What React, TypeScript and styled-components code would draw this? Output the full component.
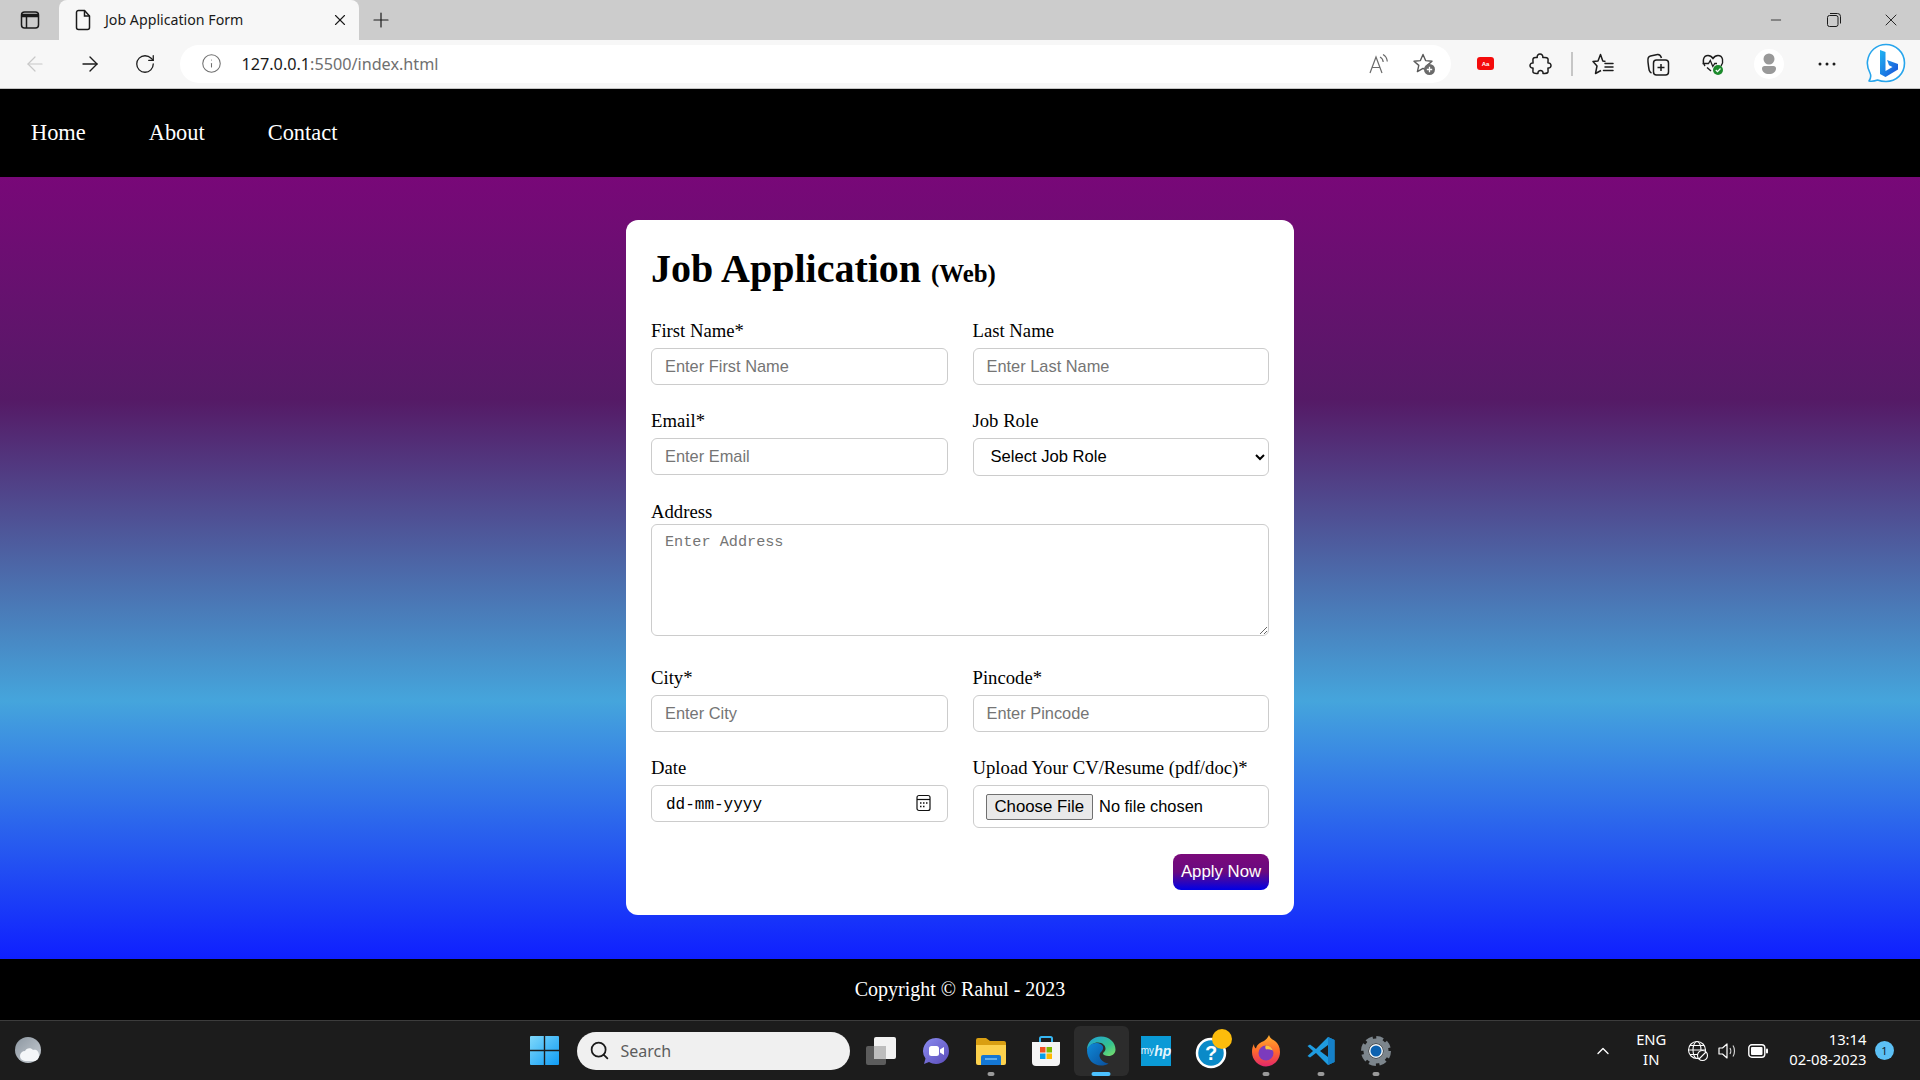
import React from 'react';
import styled, { createGlobalStyle } from 'styled-components';
import { ArrowLeft, ArrowRight, ChevronUp, Info, Minus, Plus, RotateCw, Search, X } from 'lucide-react';

const GlobalStyle = createGlobalStyle`
	html, body {
		margin: 0;
		padding: 0;
		height: 100%;
		overflow: hidden;
	}
	* {
		box-sizing: border-box;
	}
	#root {
		height: 100%;
	}
`;

const uiFont = `"Noto Sans", "Open Sans", sans-serif`;
const pageFont = `"Liberation Serif", "Times New Roman", serif`;
const fieldFont = `"Liberation Sans", Arial, sans-serif`;
const monoFont = `"Liberation Mono", "Courier New", monospace`;

const Screen = styled.div`
	display: flex;
	flex-direction: column;
	height: 1080px;
	width: 1920px;
	font-family: ${pageFont};
`;

/* browser chrome */
const TabStrip = styled.div`
	display: flex;
	align-items: stretch;
	height: 40px;
	background: #cccccc;
	color: #1a1a1a;
`;

const SideToggle = styled.div`
	display: flex;
	align-items: center;
	justify-content: center;
	width: 59px;
`;

const Tab = styled.div`
	display: flex;
	align-items: center;
	width: 300px;
	padding: 0 10px 0 15px;
	background: #f7f7f7;
	border-radius: 8px 8px 0 0;
	font-family: ${uiFont};
	font-size: 14.2px;
`;

const TabTitle = styled.span`
	flex: 1;
	margin-left: 13px;
	padding-bottom: 2px;
`;

const NewTab = styled.div`
	display: flex;
	align-items: center;
	justify-content: center;
	width: 44px;
`;

const StripSpacer = styled.div`
	flex: 1;
`;

const WinButton = styled.div`
	display: flex;
	align-items: center;
	justify-content: center;
	width: 57.5px;
`;

const Toolbar = styled.div`
	display: flex;
	align-items: center;
	height: 49px;
	padding: 0 0 1px 7px;
	background: #f7f7f7;
	border-bottom: 1px solid #c4c4c4;
`;

const ToolButton = styled.div<{ $width?: number; $muted?: boolean }>`
	display: flex;
	align-items: center;
	justify-content: center;
	flex: none;
	width: ${({ $width }) => $width ?? 55}px;
	color: ${({ $muted }) => ($muted ? '#c8c8c8' : '#1c1c1c')};
`;

const AddressPill = styled.div`
	display: flex;
	align-items: center;
	width: 1271px;
	height: 38px;
	margin: 0 7.5px;
	padding: 0 4px 0 21px;
	background: #ffffff;
	border-radius: 19px;
	font-family: ${uiFont};
	font-size: 16.2px;
	color: #6f6f6f;
`;

const UrlText = styled.span`
	flex: 1;
	margin-left: 20px;
	b {
		font-weight: 400;
		color: #1a1a1a;
	}
`;

const PillAction = styled.div`
	display: flex;
	align-items: center;
	justify-content: center;
	width: 45px;
	color: #6a6a6a;
`;

const ToolDivider = styled.div`
	flex: none;
	width: 1.5px;
	height: 24px;
	margin: 0 3px;
	background: #c6c6c6;
`;

const RedBadge = styled.div`
	display: flex;
	align-items: center;
	justify-content: center;
	width: 17px;
	height: 13px;
	border-radius: 3px;
	background: #f40b0b;
	color: #ffffff;
	font-family: ${fieldFont};
	font-size: 6px;
	font-weight: 700;
`;

const Avatar = styled.div`
	display: flex;
	align-items: center;
	justify-content: center;
	width: 30px;
	height: 30px;
	margin-left: 2px;
	border-radius: 50%;
	background: #ffffff;
`;

/* page */
const Nav = styled.nav`
	display: flex;
	align-items: center;
	gap: 63px;
	height: 88px;
	padding-left: 31px;
	background: #000000;
`;

const NavLink = styled.a`
	color: #ffffff;
	font-size: 22.4px;
	text-decoration: none;
`;

const Main = styled.main`
	flex: 1;
	display: flex;
	align-items: center;
	justify-content: center;
	padding-bottom: 2px;
	background: linear-gradient(180deg, #780878 0%, #551a66 28.5%, #45a5dc 67%, #0f1fff 100%);
`;

const Card = styled.form`
	width: 668px;
	padding: 25px;
	background: #ffffff;
	border-radius: 12px;
	color: #000000;
`;

const Title = styled.h1`
	margin: 1px 0 28px;
	font-size: 40px;
	line-height: 46px;
	font-weight: 700;
	small {
		font-size: 24.8px;
		line-height: 0;
	}
`;

const FieldGrid = styled.div`
	display: grid;
	grid-template-columns: minmax(0, 1fr) minmax(0, 1fr);
	column-gap: 25px;
	row-gap: 25px;
`;

const Field = styled.div<{ $wide?: boolean }>`
	display: flex;
	flex-direction: column;
	align-items: stretch;
	min-width: 0;
	grid-column: ${({ $wide }) => ($wide ? '1 / -1' : 'auto')};
`;

const Label = styled.label<{ $tight?: boolean }>`
	margin-bottom: ${({ $tight }) => ($tight ? 2 : 7)}px;
	font-size: 18.7px;
	line-height: 21px;
`;

const Input = styled.input`
	height: 37px;
	padding: 0 13px;
	border: 1.5px solid #cccccc;
	border-radius: 6px;
	background: #ffffff;
	font-family: ${fieldFont};
	font-size: 16.4px;
	color: #000000;
	&::placeholder {
		color: #757575;
		opacity: 1;
	}
`;

const Select = styled.select`
	height: 38px;
	padding: 0 13px;
	border: 1.5px solid #cccccc;
	border-radius: 6px;
	background: #ffffff;
	font-family: ${fieldFont};
	font-size: 16.6px;
	color: #000000;
`;

const TextArea = styled.textarea`
	display: block;
	height: 112px;
	margin-bottom: 6px;
	padding: 8px 13px;
	border: 1.5px solid #cccccc;
	border-radius: 6px;
	font-family: ${monoFont};
	font-size: 15.2px;
	&::placeholder {
		color: #757575;
		opacity: 1;
	}
`;

const DateBox = styled.div`
	display: flex;
	align-items: center;
	justify-content: space-between;
	height: 37px;
	padding: 0 16px 0 14px;
	border: 1.5px solid #cccccc;
	border-radius: 6px;
	font-family: ${monoFont};
	font-size: 16px;
	color: #000000;
	span {
		padding-top: 3px;
	}
`;

const FileInput = styled.input`
	width: 100%;
	height: 43px;
	padding: 8px 12px 6px;
	border: 1.5px solid #cccccc;
	border-radius: 6px;
	font-family: ${fieldFont};
	font-size: 16.4px;
	color: #000000;
	&::file-selector-button {
		height: 26px;
		margin-right: 6px;
		padding: 0 8px;
		border: 1px solid #707070;
		border-radius: 2px;
		background: #e9e9e9;
		font-family: ${fieldFont};
		font-size: 16.8px;
		color: #000000;
	}
`;

const Actions = styled.div`
	display: flex;
	justify-content: flex-end;
	margin-top: 26px;
`;

const ApplyButton = styled.button`
	width: 96px;
	height: 36px;
	padding: 0;
	border: none;
	border-radius: 8px;
	background: linear-gradient(180deg, #7a0a7a 0%, #6a0a80 50%, #0000e6 100%);
	color: #ffffff;
	font-family: ${fieldFont};
	font-size: 16.8px;
`;

const Footer = styled.footer`
	display: flex;
	align-items: center;
	justify-content: center;
	height: 61px;
	background: #000000;
	color: #ffffff;
	font-size: 20px;
`;

/* windows taskbar */
const Taskbar = styled.div`
	display: grid;
	grid-template-columns: 1fr auto 1fr;
	align-items: center;
	height: 60px;
	background: #1c1c1c;
	border-top: 1px solid #3c3c3c;
	color: #ffffff;
	font-family: ${uiFont};
`;

const TaskLeft = styled.div`
	display: flex;
	align-items: center;
	padding-left: 14px;
`;

const TaskCenter = styled.div`
	display: flex;
	align-items: center;
`;

const TaskItem = styled.div<{ $active?: boolean; $running?: boolean }>`
	position: relative;
	display: flex;
	align-items: center;
	justify-content: center;
	width: 55px;
	height: 50px;
	border-radius: 6px;
	background: ${({ $active }) => ($active ? '#2c2c2c' : 'transparent')};
	&::after {
		content: '';
		display: ${({ $active, $running }) => ($active || $running ? 'block' : 'none')};
		position: absolute;
		bottom: 0;
		left: 50%;
		transform: translateX(-50%);
		width: ${({ $active }) => ($active ? 19 : 7)}px;
		height: 4px;
		border-radius: 2px;
		background: ${({ $active }) => ($active ? '#4cc2ff' : '#9a9a9a')};
	}
`;

const SearchBox = styled.div`
	display: flex;
	align-items: center;
	gap: 11px;
	width: 273px;
	height: 38px;
	margin: 0 4px 0 5px;
	padding-left: 12px;
	border-radius: 19px;
	background: #f0f0f0;
	color: #5c5c5c;
	font-size: 16px;
`;

const MyHp = styled.div`
	display: flex;
	align-items: center;
	justify-content: center;
	width: 30px;
	height: 30px;
	background: #0a9ad6;
	color: #e4f5fc;
	font-family: ${fieldFont};
	font-size: 10px;
	i {
		font-size: 14px;
		font-weight: 700;
	}
`;

const Tray = styled.div`
	display: flex;
	align-items: center;
	justify-content: flex-end;
	padding-right: 26px;
`;

const TrayIcon = styled.div<{ $width: number }>`
	display: flex;
	align-items: center;
	justify-content: center;
	width: ${({ $width }) => $width}px;
`;

const TrayText = styled.div<{ $end?: boolean }>`
	display: flex;
	flex-direction: column;
	align-items: ${({ $end }) => ($end ? 'flex-end' : 'center')};
	gap: 2px;
	margin-left: ${({ $end }) => ($end ? 13 : 0)}px;
	margin-bottom: 4px;
	font-size: 14.8px;
	line-height: 18px;
`;

const CountBadge = styled.div`
	display: flex;
	align-items: center;
	justify-content: center;
	width: 19px;
	height: 19px;
	margin-left: 8.5px;
	border-radius: 50%;
	background: #5cc0f5;
	color: #10222c;
	font-size: 11px;
`;

const PageIcon = () => (
	<svg width="18" height="22" viewBox="0 0 18 22" fill="none" stroke="#1a1a1a" strokeWidth="1.5">
		<path d="M2.5 3.5a2 2 0 0 1 2-2h6l5 5.5v11.5a2 2 0 0 1-2 2h-9a2 2 0 0 1-2-2z" />
		<path d="M10.5 1.5v5.5h5" />
	</svg>
);

const SidebarIcon = () => (
	<svg width="20" height="20" viewBox="0 0 20 20" fill="none" stroke="#1a1a1a" strokeWidth="1.5">
		<rect x="1.5" y="2" width="17" height="16" rx="3" />
		<path d="M1.5 5.5h17" strokeWidth="3.5" />
		<path d="M6.5 6v12" />
	</svg>
);

const RestoreIcon = () => (
	<svg width="14" height="14" viewBox="0 0 14 14" fill="none" stroke="#1a1a1a" strokeWidth="1">
		<rect x="0.5" y="2.5" width="10.5" height="11" rx="2" />
		<path d="M3 .5h7.5a3 3 0 0 1 3 3v7" />
	</svg>
);

const ReadAloudIcon = () => (
	<svg width="22" height="22" viewBox="0 0 22 22" fill="none" stroke="#6a6a6a" strokeWidth="1.2">
		<path d="M2 20 8 4l6 16M4.2 14.5h7.6" />
		<path d="M12 4c2 1 3 2.5 3.2 5M15 1.5c2.7 1.5 4 3.8 4.3 7" />
	</svg>
);

const StarAddIcon = () => (
	<svg width="24" height="24" viewBox="0 0 24 24" fill="none">
		<path d="M11 2.5 13.6 8.6l6.4.6-4.8 4.2 1.4 6.2L11 16.4l-5.6 3.2 1.4-6.2L2 9.2l6.4-.6z" stroke="#5a5a5a" strokeWidth="1.4" strokeLinejoin="round" />
		<circle cx="17.5" cy="17.5" r="5.5" fill="#6a6a6a" />
		<path d="M17.5 14.8v5.4M14.8 17.5h5.4" stroke="#fff" strokeWidth="1.3" />
	</svg>
);

const PuzzleIcon = () => (
	<svg width="23" height="22" viewBox="0 0 23 22" fill="none" stroke="#1c1c1c" strokeWidth="1.5" strokeLinejoin="round">
		<path d="M8.2 4.500C7.800 2.500 9.300 1 11 1s3.200 1.500 2.800 3.500c2 .3 4.200-.2 5 1 .7 1.100 0 3 .2 4.500 1.700-.4 3 .9 3 2.500s-1.300 2.900-3 2.500c-.2 1.500.5 3.400-.2 4.500-.8 1.200-3 .7-4.800 1 .3-1.700-1-3-2.500-3s-2.800 1.300-2.500 3c-1.800-.3-4 .2-4.800-1-.7-1.100 0-3-.2-4.500-1.500.4-3-.9-3-2.500s1.500-2.900 3-2.500c.2-1.500-.5-3.400.2-4.500.8-1.200 2-.7 4-1z" />
	</svg>
);

const FavoritesIcon = () => (
	<svg width="22" height="22" viewBox="0 0 22 22" fill="none" stroke="#1c1c1c" strokeWidth="1.5" strokeLinejoin="round">
		<path d="M13.500 8.500 10.800 8 8.500 1.500 6 8l-5 .6 4 4.400L3.500 20.500l5.500-3" />
		<path d="M13 10.500h8M13 14h8M11.500 17.500H21" strokeLinecap="round" />
	</svg>
);

const CollectionsIcon = () => (
	<svg width="24" height="24" viewBox="0 0 24 24" fill="none" stroke="#1c1c1c" strokeWidth="1.5">
		<rect x="7.5" y="8" width="15" height="15" rx="3" />
		<path d="M15 12v7M11.500 15.500h7" />
		<path d="M5.500 21C3 20 3 18 2 10 1.500 6 2 4.500 4.500 4l7-1.500c2-.3 3 .5 4 3.500" />
	</svg>
);

const HeartIcon = () => (
	<svg width="24" height="24" viewBox="0 0 24 24" fill="none">
		<path d="M4 14C1 10 2 3.500 7 3.500c2.500 0 4 1.500 5 3 1-1.500 2.500-3 5-3 5 0 6 6.500 3 10.500M10 19l-4-3.500" stroke="#1c1c1c" strokeWidth="1.4" />
		<path d="M1.500 11.500h6l1.800-3 2.500 6 2-3h2.200" stroke="#1c1c1c" strokeWidth="1.3" />
		<circle cx="17" cy="18" r="5" fill="#1c8a2c" />
		<path d="m14.800 18 1.700 1.700 3-3.200" stroke="#fff" strokeWidth="1.2" fill="none" />
	</svg>
);

const PersonIcon = () => (
	<svg width="16" height="22" viewBox="0 0 16 22" fill="#999999">
		<circle cx="8" cy="6" r="5.5" />
		<path d="M1 15.500c0-1.500 1-2.500 2.500-2.500h9c1.500 0 2.500 1 2.500 2.500 0 3.500-3 5.500-7 5.500s-7-2-7-5.500z" />
	</svg>
);

const MoreIcon = () => (
	<svg width="18" height="4" viewBox="0 0 18 4" fill="#1c1c1c">
		<circle cx="2" cy="2" r="1.5" />
		<circle cx="9" cy="2" r="1.5" />
		<circle cx="16" cy="2" r="1.5" />
	</svg>
);

const BingIcon = () => (
	<svg width="40" height="42" viewBox="0 0 40 42" fill="none">
		<defs>
			<linearGradient id="bingB" x1="0" y1="0" x2="1" y2="1">
				<stop offset="0" stopColor="#1fb5f2" />
				<stop offset="1" stopColor="#1a4fd8" />
			</linearGradient>
		</defs>
		<path d="M3 38c2-3 2.500-5 1-8C1.500 25 1 21 1.500 18 3 8 10.500 1.500 20 1.500S38.500 9 38.500 20 30 38.500 20 38.500c-3.500 0-6-.5-8.500-1.500C9 38 6 38.500 3 38z" fill="#fff" stroke="#27a5ec" strokeWidth="1.6" strokeLinejoin="round" />
		<path d="M14 7l5.500 2v19l7-4-3.500-1.800-2-5.200 11 4v5.500L19.500 34 14 31z" fill="url(#bingB)" />
	</svg>
);

const WeatherIcon = () => (
	<svg width="30" height="30" viewBox="0 0 30 30">
		<defs>
			<linearGradient id="moon" x1="0" y1="0" x2="1" y2="1">
				<stop offset="0" stopColor="#8c96a0" />
				<stop offset="1" stopColor="#c8ced4" />
			</linearGradient>
		</defs>
		<circle cx="14" cy="14" r="13" fill="url(#moon)" />
		<path d="M11 25a5 5 0 0 1 0-10c1-3 6-4 8-1 3-1 6 1 6 5.500 0 3-2 5.500-5 5.500z" fill="#f4f6f8" />
	</svg>
);

const WindowsLogo = () => (
	<svg width="29" height="29" viewBox="0 0 29 29">
		<defs>
			<linearGradient id="win" x1="0" y1="0" x2="1" y2="1">
				<stop offset="0" stopColor="#7fd8fb" />
				<stop offset="1" stopColor="#0f9cf5" />
			</linearGradient>
		</defs>
		<path d="M0 1a1 1 0 0 1 1-1h12.800v13.800H0zM15.200 0H28a1 1 0 0 1 1 1v12.800H15.200zM0 15.200h13.800V29H1a1 1 0 0 1-1-1zM15.200 15.200H29V28a1 1 0 0 1-1 1H15.200z" fill="url(#win)" />
	</svg>
);

const TaskViewIcon = () => (
	<svg width="32" height="28" viewBox="0 0 32 28">
		<rect x="1" y="9" width="20" height="19" rx="2" fill="#5c5c5c" />
		<rect x="9" y="0" width="22" height="22" rx="2" fill="#f2f2f2" />
		<rect x="9" y="9" width="12" height="13" fill="#bdbdbd" />
	</svg>
);

const ChatIcon = () => (
	<svg width="30" height="30" viewBox="0 0 30 30">
		<defs>
			<linearGradient id="chat" x1="0" y1="0" x2="1" y2="1">
				<stop offset="0" stopColor="#8b8cf0" />
				<stop offset="1" stopColor="#5a4bb8" />
			</linearGradient>
		</defs>
		<path d="M15 2a13 13 0 0 1 0 26c-2.500 0-5-.7-7-2l-5 2 1.500-5.500A13 13 0 0 1 15 2z" fill="url(#chat)" />
		<rect x="8" y="10" width="10" height="10" rx="2.5" fill="#fff" />
		<path d="m19 13.500 4-2.500v8l-4-2.500z" fill="#fff" />
	</svg>
);

const FolderIcon = () => (
	<svg width="30" height="28" viewBox="0 0 30 28">
		<path d="M0 3a2 2 0 0 1 2-2h8l4 3h14a2 2 0 0 1 2 2v4H0z" fill="#d99f12" />
		<path d="M0 8h30v18a2 2 0 0 1-2 2H2a2 2 0 0 1-2-2z" fill="#fcd14d" />
		<path d="M5 20a2 2 0 0 1 2-2h16a2 2 0 0 1 2 2v8H5z" fill="#1477d4" />
		<path d="M9 22h12" stroke="#7cc2f5" strokeWidth="1.5" />
	</svg>
);

const StoreIcon = () => (
	<svg width="30" height="32" viewBox="0 0 30 32">
		<path d="M9 7V3.500A1.500 1.500 0 0 1 10.500 2h9A1.500 1.500 0 0 1 21 3.500V7" fill="none" stroke="#36b6f2" strokeWidth="2" />
		<path d="M1 7h28v20a4 4 0 0 1-4 4H5a4 4 0 0 1-4-4z" fill="#f4f4f4" />
		<rect x="9" y="12" width="5.5" height="5.5" fill="#f25022" />
		<rect x="15.5" y="12" width="5.5" height="5.5" fill="#7fba00" />
		<rect x="9" y="18.5" width="5.5" height="5.5" fill="#0a9ee8" />
		<rect x="15.5" y="18.5" width="5.5" height="5.5" fill="#ffb900" />
	</svg>
);

const EdgeIcon = () => (
	<svg width="30" height="30" viewBox="0 0 30 30">
		<defs>
			<linearGradient id="edgeTop" x1="0" y1="0" x2="1" y2="1">
				<stop offset="0" stopColor="#1fa0dc" />
				<stop offset="0.6" stopColor="#34c28f" />
				<stop offset="1" stopColor="#7fe06a" />
			</linearGradient>
			<linearGradient id="edgeLow" x1="0" y1="0" x2="1" y2="1">
				<stop offset="0" stopColor="#0f8ad8" />
				<stop offset="1" stopColor="#0a4f9c" />
			</linearGradient>
		</defs>
		<path d="M1 14C1 6 7 .5 15 .5c8.500 0 14.500 6 14.500 13 0 4-3 6.500-7 6.500-3 0-5.500-1-5.500-2.500 0-.5.500-1 1-1.500 1-1 1.500-2 1.500-3.500 0-3-3-6-7.500-6S4 8.500 1 14z" fill="url(#edgeTop)" />
		<path d="M1 14c1-4 5-7.500 10-7 5 .5 8 4 5 8-4 3-3 8 2 11 1 .5 3 1.500 4.500 1.500-2 1.500-4.500 2-7.500 2C7 29.500 1 23 1 14z" fill="url(#edgeLow)" />
	</svg>
);

const HelpIcon = () => (
	<svg width="36" height="40" viewBox="0 0 36 40" style={{ overflow: 'visible' }}>
		<circle cx="18" cy="22" r="14" fill="#0a8ac8" stroke="#ffffff" strokeWidth="2.5" />
		<text x="18" y="29" textAnchor="middle" fontFamily="Liberation Sans, sans-serif" fontSize="20" fontWeight="700" fill="#ffffff">?</text>
		<circle cx="29" cy="8" r="10" fill="#fcbc0c" />
	</svg>
);

const FirefoxIcon = () => (
	<svg width="30" height="32" viewBox="0 0 30 32">
		<defs>
			<linearGradient id="fox" x1="0" y1="0" x2="0" y2="1">
				<stop offset="0" stopColor="#ffb02e" />
				<stop offset="0.5" stopColor="#ff6b2c" />
				<stop offset="1" stopColor="#e3266b" />
			</linearGradient>
		</defs>
		<path d="M18 0c1 3 3 4.500 6 6 3 2.500 5 6 5 11 0 8-6.500 14.500-14 14.500S1 25 1 17c0-3 .5-5.500 2-8 0 2 .5 3.500 2 4.500C6 9 10 7 13 6c2-1.500 4-3.500 5-6z" fill="url(#fox)" />
		<circle cx="15" cy="18" r="7.5" fill="#7b3bbd" />
		<path d="M15 10.500c3 0 6 2 7 5-2-1-5-1.500-7-1-1-1.500-1-3 0-4z" fill="#ffc63a" />
	</svg>
);

const VsCodeIcon = () => (
	<svg width="30" height="30" viewBox="0 0 30 30">
		<path d="M22 1 10 13 4 8.500 1.500 10l5.500 5-5.500 5L4 21.500 10 17l12 12 6.500-3V4zM22 9v12l-8-6z" fill="#1f9ce0" fillRule="evenodd" />
		<path d="M22 1l6.500 3v22L22 29z" fill="#1580c8" />
	</svg>
);

const GearIcon = () => (
	<svg width="32" height="32" viewBox="0 0 32 32" fill="none">
		<circle cx="16" cy="16" r="12.5" stroke="#7c858c" strokeWidth="5" strokeDasharray="6.5 3.3" />
		<circle cx="16" cy="16" r="10" stroke="#7c858c" strokeWidth="5" />
		<circle cx="16" cy="16" r="7" fill="#f2f6f8" />
		<circle cx="16" cy="16" r="5.5" fill="#0d62b0" />
	</svg>
);

const GlobeOffIcon = () => (
	<svg width="22" height="22" viewBox="0 0 22 22" fill="none" stroke="#fff" strokeWidth="1.1">
		<circle cx="10" cy="10" r="8.5" />
		<ellipse cx="10" cy="10" rx="4" ry="8.5" />
		<path d="M1.500 10h17M3 5.500h14M3 14.500h8" />
		<circle cx="15.5" cy="15.5" r="5" fill="#1c1c1c" />
		<path d="m12 19 7-7" />
	</svg>
);

const SpeakerIcon = () => (
	<svg width="22" height="22" viewBox="0 0 22 22" fill="none" stroke="#fff" strokeWidth="1.2">
		<path d="M2 8h3.500L10 4v14l-4.500-4H2z" strokeLinejoin="round" />
		<path d="M13 8c1 1.500 1 4.500 0 6M16 5.500c2 3 2 8 0 11" strokeOpacity="0.8" />
	</svg>
);

const BatteryIcon = () => (
	<svg width="20" height="14" viewBox="0 0 20 14">
		<rect x="0.8" y="0.8" width="16" height="12.4" rx="3" fill="none" stroke="#fff" strokeWidth="1.4" />
		<rect x="3" y="3" width="11.5" height="8" rx="1" fill="#fff" />
		<rect x="18" y="4.5" width="2" height="5" rx="1" fill="#fff" />
	</svg>
);

const CalendarIcon = () => (
	<svg width="15" height="18" viewBox="0 0 15 18" fill="none" stroke="#111" strokeWidth="1.2">
		<rect x="1" y="1.500" width="13" height="15" rx="2" />
		<path d="M1 5.500h13" />
		<path d="M4 9h1.500M7 9h1.500M10 9h1.500M4 12.500h1.500M7 12.500h1.500" strokeWidth="1.6" />
	</svg>
);

const topFields = [
	{ id: 'first', label: 'First Name*', placeholder: 'Enter First Name' },
	{ id: 'last', label: 'Last Name', placeholder: 'Enter Last Name' },
];

const lowerFields = [
	{ id: 'city', label: 'City*', placeholder: 'Enter City' },
	{ id: 'pincode', label: 'Pincode*', placeholder: 'Enter Pincode' },
];

export default function App() {
	return (
		<Screen>
			<GlobalStyle />

			<TabStrip>
				<SideToggle><SidebarIcon /></SideToggle>
				<Tab>
					<PageIcon />
					<TabTitle>Job Application Form</TabTitle>
					<X size={18} strokeWidth={1.5} />
				</Tab>
				<NewTab><Plus size={24} strokeWidth={1.2} /></NewTab>
				<StripSpacer />
				<WinButton><Minus size={16} strokeWidth={1.2} /></WinButton>
				<WinButton><RestoreIcon /></WinButton>
				<WinButton><X size={20} strokeWidth={1.1} /></WinButton>
			</TabStrip>

			<Toolbar>
				<ToolButton $muted><ArrowLeft size={24} strokeWidth={1.2} /></ToolButton>
				<ToolButton><ArrowRight size={24} strokeWidth={1.4} /></ToolButton>
				<ToolButton><RotateCw size={22} strokeWidth={1.4} /></ToolButton>
				<AddressPill>
					<Info size={21} strokeWidth={1.2} />
					<UrlText><b>127.0.0.1</b>:5500/index.html</UrlText>
					<PillAction><ReadAloudIcon /></PillAction>
					<PillAction><StarAddIcon /></PillAction>
				</AddressPill>
				<ToolButton><RedBadge>Aa</RedBadge></ToolButton>
				<ToolButton><PuzzleIcon /></ToolButton>
				<ToolDivider />
				<ToolButton><FavoritesIcon /></ToolButton>
				<ToolButton><CollectionsIcon /></ToolButton>
				<ToolButton><HeartIcon /></ToolButton>
				<ToolButton><Avatar><PersonIcon /></Avatar></ToolButton>
				<ToolButton $width={63}><MoreIcon /></ToolButton>
				<ToolButton><BingIcon /></ToolButton>
			</Toolbar>

			<Nav>
				<NavLink href="#">Home</NavLink>
				<NavLink href="#">About</NavLink>
				<NavLink href="#">Contact</NavLink>
			</Nav>

			<Main>
				<Card>
					<Title>Job Application <small>(Web)</small></Title>
					<FieldGrid>
						{topFields.map(f => (
							<Field key={f.id}>
								<Label htmlFor={f.id}>{f.label}</Label>
								<Input id={f.id} type="text" placeholder={f.placeholder} />
							</Field>
						))}
						<Field>
							<Label htmlFor="email">Email*</Label>
							<Input id="email" type="email" placeholder="Enter Email" />
						</Field>
						<Field>
							<Label htmlFor="role">Job Role</Label>
							<Select id="role" defaultValue="">
								<option value="">Select Job Role</option>
								<option value="frontend">Frontend</option>
								<option value="backend">Backend</option>
							</Select>
						</Field>
						<Field $wide>
							<Label htmlFor="address" $tight>Address</Label>
							<TextArea id="address" placeholder="Enter Address" />
						</Field>
						{lowerFields.map(f => (
							<Field key={f.id}>
								<Label htmlFor={f.id}>{f.label}</Label>
								<Input id={f.id} type="text" placeholder={f.placeholder} />
							</Field>
						))}
						<Field>
							<Label>Date</Label>
							<DateBox>
								<span>dd-mm-yyyy</span>
								<CalendarIcon />
							</DateBox>
						</Field>
						<Field>
							<Label htmlFor="cv">Upload Your CV/Resume (pdf/doc)*</Label>
							<FileInput id="cv" type="file" />
						</Field>
					</FieldGrid>
					<Actions>
						<ApplyButton type="button">Apply Now</ApplyButton>
					</Actions>
				</Card>
			</Main>

			<Footer>Copyright © Rahul - 2023</Footer>

			<Taskbar>
				<TaskLeft><WeatherIcon /></TaskLeft>
				<TaskCenter>
					<TaskItem><WindowsLogo /></TaskItem>
					<SearchBox>
						<Search size={21} color="#1a1a1a" strokeWidth={2} />
						Search
					</SearchBox>
					<TaskItem><TaskViewIcon /></TaskItem>
					<TaskItem><ChatIcon /></TaskItem>
					<TaskItem $running><FolderIcon /></TaskItem>
					<TaskItem><StoreIcon /></TaskItem>
					<TaskItem $active><EdgeIcon /></TaskItem>
					<TaskItem><MyHp>my<i>hp</i></MyHp></TaskItem>
					<TaskItem><HelpIcon /></TaskItem>
					<TaskItem $running><FirefoxIcon /></TaskItem>
					<TaskItem $running><VsCodeIcon /></TaskItem>
					<TaskItem $running><GearIcon /></TaskItem>
				</TaskCenter>
				<Tray>
					<TrayIcon $width={36}><ChevronUp size={20} strokeWidth={1.6} /></TrayIcon>
					<TrayIcon $width={60}>
						<TrayText><span>ENG</span><span>IN</span></TrayText>
					</TrayIcon>
					<TrayIcon $width={34}><GlobeOffIcon /></TrayIcon>
					<TrayIcon $width={25}><SpeakerIcon /></TrayIcon>
					<TrayIcon $width={36}><BatteryIcon /></TrayIcon>
					<TrayText $end>
						<span>13:14</span>
						<span>02-08-2023</span>
					</TrayText>
					<CountBadge>1</CountBadge>
				</Tray>
			</Taskbar>
		</Screen>
	);
}
